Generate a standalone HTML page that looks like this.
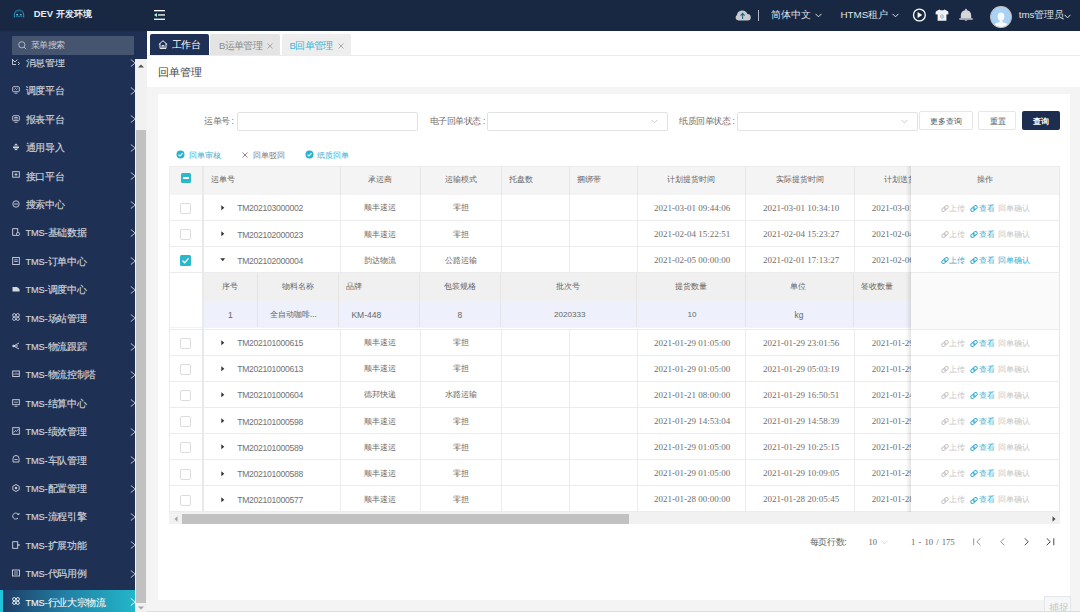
<!DOCTYPE html>
<html><head><meta charset="utf-8">
<style>
*{box-sizing:border-box;margin:0;padding:0}
html,body{width:1080px;height:612px;overflow:hidden;background:#f4f4f4;font-family:"Liberation Sans",sans-serif;color:#666}
.a{position:absolute}
.t{position:absolute;white-space:nowrap;line-height:1}
#hdr{left:0;top:0;width:1080px;height:31px;background:#182842}
#side{left:0;top:31px;width:147px;height:581px;background:#1f3055;overflow:hidden}
.mi{position:absolute;left:0;width:135px;height:28.36px;color:#d0d4db;font-size:9.5px}
.mi .ic{position:absolute;left:12px;top:7.8px;width:8px;height:8px}
.mi .tx{position:absolute;left:25.5px;top:0px;line-height:26.5px;white-space:nowrap;letter-spacing:-0.3px;-webkit-text-stroke:0.15px #d0d4db}
.mi .ar{position:absolute;left:130.3px;top:8.5px;width:7px;height:8px}
.sb{left:135px;top:59px;width:12px;height:553px;background:#f1f1f1}
.card{left:158px;top:93.6px;width:912px;height:506.4px;background:#fff}
.tbl td{position:absolute}
.bd{position:absolute;background:#e9e9e9}
.cb{position:absolute;width:11px;height:11px;border:1px solid #dcdcdc;border-radius:2px;background:#fff}
.num{font-family:"Liberation Serif",serif}
</style></head><body>
<!-- header -->
<div id="hdr" class="a">
  <svg class="a" style="left:13px;top:8.5px" width="12" height="9" viewBox="0 0 12 9"><path d="M1.4 8.4 V5.6 A4.6 4.6 0 0 1 10.6 5.6 V8.4" fill="none" stroke="#2284b0" stroke-width="1.2"/><path d="M2.8 3.3 Q6 2 9.2 3.3" fill="none" stroke="#1d5f86" stroke-width="0.7"/><ellipse cx="4.2" cy="5.8" rx="1.1" ry="0.7" fill="#8fd8ee"/><ellipse cx="7.8" cy="5.8" rx="1.1" ry="0.7" fill="#5fc0e2"/><path d="M2.6 7.6 Q4.5 6.6 6 7.8 Q7.5 6.6 9.4 7.6" fill="none" stroke="#2284b0" stroke-width="0.9"/></svg>
  <div class="t" style="left:33.7px;top:9.4px;font-size:9.4px;font-weight:bold;color:#e8ebf0">DEV 开发环境</div>
  <svg class="a" style="left:154px;top:10px" width="12" height="10" viewBox="0 0 12 10"><rect x="0" y="0" width="11" height="1.3" fill="#fff"/><rect x="4" y="4.3" width="7" height="1.3" fill="#fff"/><rect x="0" y="8.6" width="11" height="1.3" fill="#fff"/><path d="M0 5 L3 3 L3 7Z" fill="#9fd"/></svg>
  <!-- right -->
  <svg class="a" style="left:734.5px;top:9.3px" width="16" height="12" viewBox="0 0 16 12"><path d="M3.3 11.5 A3.1 3.1 0 0 1 1.9 5.9 A5.5 5.5 0 0 1 12.4 5.1 A3.1 3.1 0 0 1 12.7 11.5 Z" fill="#c9cacd"/><path d="M7.6 10 V4.6 M5.6 6.6 L7.6 4.4 L9.6 6.6" stroke="#1f6585" stroke-width="1.1" fill="none"/></svg>
  <div class="a" style="left:758px;top:10px;width:1px;height:11px;background:#b4b7bf"></div>
  <div class="t" style="left:771px;top:10px;font-size:9.8px;color:#dfe2e8">简体中文</div>
  <svg class="a" style="left:815px;top:13px" width="7" height="5" viewBox="0 0 7 5"><path d="M0.5 0.8 L3.5 3.8 L6.5 0.8" stroke="#dfe2e8" stroke-width="1" fill="none"/></svg>
  <div class="t" style="left:840.5px;top:10px;font-size:9.8px;color:#dfe2e8">HTMS租户</div>
  <svg class="a" style="left:892px;top:13px" width="7" height="5" viewBox="0 0 7 5"><path d="M0.5 0.8 L3.5 3.8 L6.5 0.8" stroke="#dfe2e8" stroke-width="1" fill="none"/></svg>
  <svg class="a" style="left:912px;top:8px" width="15" height="14" viewBox="0 0 15 14"><circle cx="7.4" cy="7" r="5.9" fill="none" stroke="#fff" stroke-width="1.3"/><path d="M5.6 3.9 L10.2 7 L5.6 10.1Z" fill="#fff"/></svg>
  <svg class="a" style="left:935px;top:9px" width="14" height="13" viewBox="0 0 14 13"><path d="M4.3 0.5 L0.8 2.4 L0.5 5.2 L2.6 5.4 L2.6 11.8 L11.4 11.8 L11.4 5.4 L13.5 5.2 L13.2 2.4 L9.7 0.5 Q7 2.2 4.3 0.5Z" fill="#f2f2f2"/><rect x="6.6" y="5" width="0.9" height="5" fill="#5ab8e0"/><rect x="5.2" y="6" width="0.7" height="3" fill="#e8a0a0"/><rect x="8.2" y="6" width="0.7" height="3" fill="#e8a0a0"/></svg>
  <svg class="a" style="left:958.5px;top:7.5px" width="14" height="14" viewBox="0 0 14 14"><path d="M1.8 10.2 L1.8 7.2 A5.2 5.2 0 0 1 12.2 7.2 L12.2 10.2Z" fill="#d4d6da"/><rect x="0.3" y="10.3" width="13.4" height="1.4" fill="#d4d6da"/><rect x="5.8" y="11.5" width="2.4" height="1.2" fill="#aeb2b8"/><circle cx="7" cy="1.7" r="0.9" fill="#d4d6da"/></svg>
  <svg class="a" style="left:989.5px;top:5.5px" width="22" height="22" viewBox="0 0 22 22"><defs><clipPath id="av"><circle cx="11" cy="11" r="10"/></clipPath></defs><circle cx="11" cy="11" r="10.4" fill="#a9d1f5" stroke="#bfc3c9" stroke-width="1.1"/><g clip-path="url(#av)"><ellipse cx="11" cy="10.6" rx="3.4" ry="4.1" fill="#f7faff"/><rect x="9.6" y="13.5" width="2.8" height="3" fill="#f7faff"/><path d="M2.5 22 Q3.5 17 9.6 16.3 L12.4 16.3 Q18.5 17 19.5 22Z" fill="#f7faff"/></g></svg>
  <div class="t" style="left:1018.7px;top:10.3px;font-size:9.8px;color:#dfe2e8">tms管理员</div>
  <svg class="a" style="left:1063.5px;top:14px" width="7" height="5" viewBox="0 0 7 5"><path d="M0.5 0.8 L3.5 3.8 L6.5 0.8" stroke="#dfe2e8" stroke-width="1" fill="none"/></svg>
</div>

<!-- sidebar -->
<div id="side" class="a">
  <div id="menu" class="a" style="left:0;top:0;width:135px;height:581px;overflow:hidden">
  <div class="mi" style="top:19.00px"><svg class="ic" viewBox="0 0 8 8"><path d="M0.5 1.5 L3 4 L5.5 1.5 M0.5 1 V6.5 H4 M6 4 L7.5 5.5 L6 7" fill="none" stroke="#d3d7de" stroke-width="0.9"/></svg><div class="tx">消息管理</div><svg class="ar" viewBox="0 0 7 8"><path d="M0.8 0.5 L5.3 4 L0.8 7.5" stroke="#c9ced7" stroke-width="0.9" fill="none"/></svg></div>
<div class="mi" style="top:47.40px"><svg class="ic" viewBox="0 0 8 8"><rect x="0.7" y="0.7" width="6.6" height="5" rx="0.8" fill="none" stroke="#d3d7de" stroke-width="0.9"/><path d="M2.5 7.3 H5.5 M2.5 3.5 L3.5 2.5 L4.5 3.5 L5.5 2.5" stroke="#d3d7de" stroke-width="0.8" fill="none"/></svg><div class="tx">调度平台</div><svg class="ar" viewBox="0 0 7 8"><path d="M0.8 0.5 L5.3 4 L0.8 7.5" stroke="#c9ced7" stroke-width="0.9" fill="none"/></svg></div>
<div class="mi" style="top:75.80px"><svg class="ic" viewBox="0 0 8 8"><rect x="0.7" y="0.7" width="6.6" height="5" rx="0.8" fill="none" stroke="#d3d7de" stroke-width="0.9"/><path d="M2.5 7.3 H5.5 M2.2 4 H5.8 M2.2 2.5 H5.8" stroke="#d3d7de" stroke-width="0.8" fill="none"/></svg><div class="tx">报表平台</div><svg class="ar" viewBox="0 0 7 8"><path d="M0.8 0.5 L5.3 4 L0.8 7.5" stroke="#c9ced7" stroke-width="0.9" fill="none"/></svg></div>
<div class="mi" style="top:104.20px"><svg class="ic" viewBox="0 0 8 8"><path d="M4 0.5 L6 2.5 H2Z M1 3.5 H7 V5 H1Z M1.5 5.5 L4 7.5 L6.5 5.5" fill="#d3d7de"/></svg><div class="tx">通用导入</div><svg class="ar" viewBox="0 0 7 8"><path d="M0.8 0.5 L5.3 4 L0.8 7.5" stroke="#c9ced7" stroke-width="0.9" fill="none"/></svg></div>
<div class="mi" style="top:132.60px"><svg class="ic" viewBox="0 0 8 8"><rect x="0.7" y="0.7" width="6.6" height="5.5" fill="none" stroke="#d3d7de" stroke-width="0.9"/><path d="M2.5 3.5 H5.5 M4 2 V5" stroke="#d3d7de" stroke-width="0.8"/></svg><div class="tx">接口平台</div><svg class="ar" viewBox="0 0 7 8"><path d="M0.8 0.5 L5.3 4 L0.8 7.5" stroke="#c9ced7" stroke-width="0.9" fill="none"/></svg></div>
<div class="mi" style="top:161.00px"><svg class="ic" viewBox="0 0 8 8"><circle cx="4" cy="4" r="3.2" fill="none" stroke="#d3d7de" stroke-width="0.9"/><path d="M2 4 H6" stroke="#d3d7de" stroke-width="0.9"/></svg><div class="tx">搜索中心</div><svg class="ar" viewBox="0 0 7 8"><path d="M0.8 0.5 L5.3 4 L0.8 7.5" stroke="#c9ced7" stroke-width="0.9" fill="none"/></svg></div>
<div class="mi" style="top:189.40px"><svg class="ic" viewBox="0 0 8 8"><rect x="0.7" y="0.7" width="5" height="6.6" fill="none" stroke="#d3d7de" stroke-width="0.9"/><circle cx="6" cy="6" r="1.6" fill="#1f3055" stroke="#d3d7de" stroke-width="0.8"/></svg><div class="tx"><span style="font-size:9.2px;letter-spacing:-0.1px">TMS-</span>基础数据</div><svg class="ar" viewBox="0 0 7 8"><path d="M0.8 0.5 L5.3 4 L0.8 7.5" stroke="#c9ced7" stroke-width="0.9" fill="none"/></svg></div>
<div class="mi" style="top:217.80px"><svg class="ic" viewBox="0 0 8 8"><rect x="0.7" y="0.5" width="6.6" height="7" fill="none" stroke="#d3d7de" stroke-width="0.9"/><path d="M2.2 2.8 H5.8 M2.2 4.5 H5.8" stroke="#d3d7de" stroke-width="0.8"/></svg><div class="tx"><span style="font-size:9.2px;letter-spacing:-0.1px">TMS-</span>订单中心</div><svg class="ar" viewBox="0 0 7 8"><path d="M0.8 0.5 L5.3 4 L0.8 7.5" stroke="#c9ced7" stroke-width="0.9" fill="none"/></svg></div>
<div class="mi" style="top:246.20px"><svg class="ic" viewBox="0 0 8 8"><path d="M0.5 2 H5 L7.5 4 V6.5 H0.5Z" fill="#d3d7de"/></svg><div class="tx"><span style="font-size:9.2px;letter-spacing:-0.1px">TMS-</span>调度中心</div><svg class="ar" viewBox="0 0 7 8"><path d="M0.8 0.5 L5.3 4 L0.8 7.5" stroke="#c9ced7" stroke-width="0.9" fill="none"/></svg></div>
<div class="mi" style="top:274.60px"><svg class="ic" viewBox="0 0 8 8"><circle cx="2.2" cy="2.2" r="1.6" fill="none" stroke="#d3d7de" stroke-width="0.9"/><circle cx="5.8" cy="2.2" r="1.6" fill="none" stroke="#d3d7de" stroke-width="0.9"/><circle cx="2.2" cy="5.8" r="1.6" fill="none" stroke="#d3d7de" stroke-width="0.9"/><circle cx="5.8" cy="5.8" r="1.6" fill="none" stroke="#d3d7de" stroke-width="0.9"/></svg><div class="tx"><span style="font-size:9.2px;letter-spacing:-0.1px">TMS-</span>场站管理</div><svg class="ar" viewBox="0 0 7 8"><path d="M0.8 0.5 L5.3 4 L0.8 7.5" stroke="#c9ced7" stroke-width="0.9" fill="none"/></svg></div>
<div class="mi" style="top:303.00px"><svg class="ic" viewBox="0 0 8 8"><circle cx="1.5" cy="4" r="1.2" fill="#d3d7de"/><path d="M1.5 4 L7 1 M1.5 4 L7 7 M1.5 4 H6" stroke="#d3d7de" stroke-width="0.9"/></svg><div class="tx"><span style="font-size:9.2px;letter-spacing:-0.1px">TMS-</span>物流跟踪</div><svg class="ar" viewBox="0 0 7 8"><path d="M0.8 0.5 L5.3 4 L0.8 7.5" stroke="#c9ced7" stroke-width="0.9" fill="none"/></svg></div>
<div class="mi" style="top:331.40px"><svg class="ic" viewBox="0 0 8 8"><rect x="0.7" y="1" width="6.6" height="5.5" fill="none" stroke="#d3d7de" stroke-width="0.9"/><path d="M2 5 V3.5 M4 5 V2.5 M6 5 V3" stroke="#d3d7de" stroke-width="0.8"/></svg><div class="tx"><span style="font-size:9.2px;letter-spacing:-0.1px">TMS-</span>物流控制塔</div><svg class="ar" viewBox="0 0 7 8"><path d="M0.8 0.5 L5.3 4 L0.8 7.5" stroke="#c9ced7" stroke-width="0.9" fill="none"/></svg></div>
<div class="mi" style="top:359.80px"><svg class="ic" viewBox="0 0 8 8"><rect x="0.7" y="0.7" width="6.6" height="5" fill="none" stroke="#d3d7de" stroke-width="0.9"/><path d="M2.5 7.3 H5.5 M2.2 3.2 H5.8" stroke="#d3d7de" stroke-width="0.8"/></svg><div class="tx"><span style="font-size:9.2px;letter-spacing:-0.1px">TMS-</span>结算中心</div><svg class="ar" viewBox="0 0 7 8"><path d="M0.8 0.5 L5.3 4 L0.8 7.5" stroke="#c9ced7" stroke-width="0.9" fill="none"/></svg></div>
<div class="mi" style="top:388.20px"><svg class="ic" viewBox="0 0 8 8"><rect x="0.7" y="0.7" width="6.6" height="6.6" fill="none" stroke="#d3d7de" stroke-width="0.9"/><path d="M1.5 5.5 L3.2 3.5 L4.5 4.5 L6.5 2" stroke="#d3d7de" stroke-width="0.8" fill="none"/></svg><div class="tx"><span style="font-size:9.2px;letter-spacing:-0.1px">TMS-</span>绩效管理</div><svg class="ar" viewBox="0 0 7 8"><path d="M0.8 0.5 L5.3 4 L0.8 7.5" stroke="#c9ced7" stroke-width="0.9" fill="none"/></svg></div>
<div class="mi" style="top:416.60px"><svg class="ic" viewBox="0 0 8 8"><path d="M1 7 V3.5 A3 3 0 0 1 7 3.5 V7Z" fill="none" stroke="#d3d7de" stroke-width="0.9"/><path d="M2.5 4.5 H5.5" stroke="#d3d7de" stroke-width="0.9"/></svg><div class="tx"><span style="font-size:9.2px;letter-spacing:-0.1px">TMS-</span>车队管理</div><svg class="ar" viewBox="0 0 7 8"><path d="M0.8 0.5 L5.3 4 L0.8 7.5" stroke="#c9ced7" stroke-width="0.9" fill="none"/></svg></div>
<div class="mi" style="top:445.00px"><svg class="ic" viewBox="0 0 8 8"><path d="M4 0.5 L7.2 2.3 V5.7 L4 7.5 L0.8 5.7 V2.3Z" fill="none" stroke="#d3d7de" stroke-width="0.9"/><circle cx="4" cy="4" r="1.2" fill="#d3d7de"/></svg><div class="tx"><span style="font-size:9.2px;letter-spacing:-0.1px">TMS-</span>配置管理</div><svg class="ar" viewBox="0 0 7 8"><path d="M0.8 0.5 L5.3 4 L0.8 7.5" stroke="#c9ced7" stroke-width="0.9" fill="none"/></svg></div>
<div class="mi" style="top:473.40px"><svg class="ic" viewBox="0 0 8 8"><path d="M6.5 3 A3 3 0 1 0 6 6" fill="none" stroke="#d3d7de" stroke-width="0.9"/><path d="M5.5 2.5 H7 V1" stroke="#d3d7de" stroke-width="0.9" fill="none"/></svg><div class="tx"><span style="font-size:9.2px;letter-spacing:-0.1px">TMS-</span>流程引擎</div><svg class="ar" viewBox="0 0 7 8"><path d="M0.8 0.5 L5.3 4 L0.8 7.5" stroke="#c9ced7" stroke-width="0.9" fill="none"/></svg></div>
<div class="mi" style="top:501.80px"><svg class="ic" viewBox="0 0 8 8"><rect x="0.7" y="0.7" width="5" height="6.6" fill="none" stroke="#d3d7de" stroke-width="0.9"/><path d="M5 4 H7.5 M6.5 3 L7.5 4 L6.5 5" stroke="#d3d7de" stroke-width="0.8" fill="none"/></svg><div class="tx"><span style="font-size:9.2px;letter-spacing:-0.1px">TMS-</span>扩展功能</div><svg class="ar" viewBox="0 0 7 8"><path d="M0.8 0.5 L5.3 4 L0.8 7.5" stroke="#c9ced7" stroke-width="0.9" fill="none"/></svg></div>
<div class="mi" style="top:530.20px"><svg class="ic" viewBox="0 0 8 8"><rect x="0.5" y="1" width="7" height="6" fill="none" stroke="#d3d7de" stroke-width="0.9"/><path d="M2 3 H6 M2 5 H6" stroke="#d3d7de" stroke-width="0.8"/></svg><div class="tx"><span style="font-size:9.2px;letter-spacing:-0.1px">TMS-</span>代码用例</div><svg class="ar" viewBox="0 0 7 8"><path d="M0.8 0.5 L5.3 4 L0.8 7.5" stroke="#c9ced7" stroke-width="0.9" fill="none"/></svg></div>
<div class="mi" style="top:558.60px;background:linear-gradient(90deg,#1e3862 0%,#2282a5 50%,#22b6ca 100%);color:#fff"><div class="a" style="left:0;top:0;width:2.5px;height:100%;background:#20c4d8"></div><svg class="ic" viewBox="0 0 8 8"><circle cx="2.2" cy="2.2" r="1.6" fill="none" stroke="#fff" stroke-width="0.9"/><circle cx="5.8" cy="2.2" r="1.6" fill="none" stroke="#fff" stroke-width="0.9"/><circle cx="2.2" cy="5.8" r="1.6" fill="none" stroke="#fff" stroke-width="0.9"/><circle cx="5.8" cy="5.8" r="1.6" fill="none" stroke="#fff" stroke-width="0.9"/></svg><div class="tx"><span style="font-size:9.2px;letter-spacing:-0.1px">TMS-</span>行业大宗物流</div><svg class="ar" viewBox="0 0 7 8"><path d="M0.8 0.5 L5.3 4 L0.8 7.5" stroke="#fff" stroke-width="0.9" fill="none"/></svg></div>
  </div>
  <div class="a" style="left:0;top:0;width:147px;height:28px;background:#1f3055"></div>
  <div class="a" style="left:12px;top:5px;width:122px;height:19px;background:#46556f;border-radius:1px"></div>
  <svg class="a" style="left:18px;top:10px" width="9" height="9" viewBox="0 0 9 9"><circle cx="3.8" cy="3.8" r="3.1" fill="none" stroke="#b8bfcb" stroke-width="0.9"/><path d="M6 6 L8.2 8.2" stroke="#b8bfcb" stroke-width="0.9"/></svg>
  <div class="t" style="left:31.3px;top:10px;font-size:8.6px;letter-spacing:-0.85px;color:#c6cbd3">菜单搜索</div>
</div>
<div class="a sb">
  <div class="a" style="left:1px;top:71px;width:10px;height:473px;background:#c1c1c1"></div>
  <svg class="a" style="left:3px;top:5px" width="6" height="4"><path d="M0 3.5 L3 0.5 L6 3.5Z" fill="#505050"/></svg>
  <svg class="a" style="left:3px;top:547px" width="6" height="4"><path d="M0 0.5 L3 3.5 L6 0.5Z" fill="#a3a3a3"/></svg>
</div>

<!-- tabs bar -->
<div class="a" style="left:147px;top:31px;width:933px;height:56px;background:#fff"></div>
<div class="a" style="left:147px;top:55px;width:933px;height:1px;background:#ececec"></div>
<div class="a" style="left:150px;top:34px;width:59px;height:21px;background:#1f3055;border-radius:2px 2px 0 0"></div>
<svg class="a" style="left:157.5px;top:40.3px" width="10" height="9" viewBox="0 0 10 9"><path d="M0.8 4.6 L5 0.7 L9.2 4.6 M2 3.6 V8.4 H8 V3.6 M4 8.4 V5.6 H6 V8.4" fill="none" stroke="#fff" stroke-width="0.95"/></svg>
<div class="t" style="left:171.7px;top:40px;font-size:9.6px;letter-spacing:-0.3px;color:#fff">工作台</div>
<div class="a" style="left:210px;top:34px;width:70px;height:21px;background:#e4e4e4;border-radius:2px 2px 0 0"></div>
<div class="t" style="left:219px;top:40.5px;font-size:9.5px;letter-spacing:-0.65px;color:#8a8a8a">B运单管理</div>
<svg class="a" style="left:267px;top:42.5px" width="6" height="6"><path d="M0.5 0.5 L5.5 5.5 M5.5 0.5 L0.5 5.5" stroke="#999" stroke-width="0.8"/></svg>
<div class="a" style="left:281.5px;top:34px;width:69px;height:21px;background:#eeeeee;border-radius:2px 2px 0 0"></div>
<div class="t" style="left:289.5px;top:40.5px;font-size:9.5px;letter-spacing:-0.65px;color:#3db6d8">B回单管理</div>
<svg class="a" style="left:338px;top:42.5px" width="6" height="6"><path d="M0.5 0.5 L5.5 5.5 M5.5 0.5 L0.5 5.5" stroke="#999" stroke-width="0.8"/></svg>
<div class="t" style="left:157.7px;top:66.5px;font-size:11px;color:#444">回单管理</div>
<div class="a" style="left:147px;top:87px;width:933px;height:525px;background:#f4f4f4"></div>

<!-- card -->
<div class="a card">
</div>
<div class="t" style="left:204px;top:116.5px;font-size:8.6px;color:#707070;letter-spacing:-0.45px">运单号 :</div>
<div class="a" style="left:237px;top:111.6px;width:181px;height:19px;background:#fff;border:1px solid #e2e2e2;border-radius:2px"></div>
<div class="t" style="left:429.7px;top:116.5px;font-size:8.6px;color:#707070;letter-spacing:-0.45px">电子回单状态 :</div>
<div class="a" style="left:487px;top:111.6px;width:181.3px;height:19px;background:#fff;border:1px solid #e2e2e2;border-radius:2px"></div>
<svg class="a" style="left:651px;top:119px" width="7" height="5"><path d="M0.5 0.8 L3.5 3.8 L6.5 0.8" stroke="#bbb" stroke-width="0.8" fill="none"/></svg>
<div class="t" style="left:679.3px;top:116.5px;font-size:8.6px;color:#707070;letter-spacing:-0.45px">纸质回单状态 :</div>
<div class="a" style="left:737.4px;top:111.6px;width:180.6px;height:19px;background:#fff;border:1px solid #e2e2e2;border-radius:2px"></div>
<svg class="a" style="left:901px;top:119px" width="7" height="5"><path d="M0.5 0.8 L3.5 3.8 L6.5 0.8" stroke="#bbb" stroke-width="0.8" fill="none"/></svg>
<div class="a" style="left:919.3px;top:111.3px;width:53.7px;height:19px;background:#fff;border:1px solid #e6e6e6;border-radius:2px"></div>
<div class="t" style="left:930px;top:117.6px;font-size:8.1px;color:#555;">更多查询</div>
<div class="a" style="left:978.3px;top:111.3px;width:38px;height:19px;background:#fff;border:1px solid #e6e6e6;border-radius:2px"></div>
<div class="t" style="left:989.7px;top:117.6px;font-size:8.1px;color:#555;">重置</div>
<div class="a" style="left:1022px;top:111.3px;width:38px;height:18.8px;background:#1d2d50;border-radius:2px"></div>
<div class="t" style="left:1032.5px;top:117.4px;font-size:8.3px;color:#fff;font-weight:bold">查询</div>
<svg class="a" style="left:176.3px;top:150.3px" width="9" height="9" viewBox="0 0 9 9"><circle cx="4.5" cy="4.5" r="4" fill="#2ab1cf"/><path d="M2.5 4.6 L4 6 L6.6 3.2" stroke="#fff" stroke-width="1.1" fill="none"/></svg>
<div class="t" style="left:188.7px;top:151.8px;font-size:8.2px;color:#3bb0d3;">回单审核</div>
<svg class="a" style="left:242px;top:152.3px" width="6" height="6"><path d="M0.5 0.5 L5.5 5.5 M5.5 0.5 L0.5 5.5" stroke="#8a7a72" stroke-width="0.9"/></svg>
<div class="t" style="left:253px;top:151.8px;font-size:8.2px;color:#8a7a72;">回单驳回</div>
<svg class="a" style="left:304.6px;top:150.3px" width="9" height="9" viewBox="0 0 9 9"><circle cx="4.5" cy="4.5" r="4" fill="#2ab1cf"/><path d="M2.5 4.6 L4 6 L6.6 3.2" stroke="#fff" stroke-width="1.1" fill="none"/></svg>
<div class="t" style="left:316.9px;top:151.8px;font-size:8.2px;color:#3bb0d3;">纸质回单</div>
<div class="a" style="left:169.4px;top:166px;width:890.6px;height:28.69999999999999px;background:#f4f4f4;border-top:1px solid #ececec"></div>
<div class="t" style="left:211px;top:175.5px;font-size:8.2px;color:#666;">运单号</div>
<div class="t" style="left:368px;top:175.5px;font-size:8.2px;color:#666;">承运商</div>
<div class="t" style="left:444.5px;top:175.5px;font-size:8.2px;color:#666;">运输模式</div>
<div class="t" style="left:509px;top:175.5px;font-size:8.2px;color:#666;">托盘数</div>
<div class="t" style="left:577.2px;top:175.5px;font-size:8.2px;color:#666;">捆绑带</div>
<div class="t" style="left:667px;top:175.5px;font-size:8.2px;color:#666;">计划提货时间</div>
<div class="t" style="left:775.5px;top:175.5px;font-size:8.2px;color:#666;">实际提货时间</div>
<div class="t" style="left:884px;top:175.5px;font-size:8.2px;color:#666;">计划送货时间</div>
<div class="a" style="left:180.7px;top:172.7px;width:10.6px;height:10.6px;background:#2bb8cb;border-radius:1.5px"></div><div class="a" style="left:182.7px;top:177.3px;width:6.6px;height:1.4px;background:#fff"></div>
<div class="a" style="left:203px;top:166px;width:1px;height:28.69999999999999px;background:#e6e6e6;"></div>
<div class="a" style="left:339.6px;top:166px;width:1px;height:28.69999999999999px;background:#e6e6e6;"></div>
<div class="a" style="left:420.2px;top:166px;width:1px;height:28.69999999999999px;background:#e6e6e6;"></div>
<div class="a" style="left:501.2px;top:166px;width:1px;height:28.69999999999999px;background:#e6e6e6;"></div>
<div class="a" style="left:569.2px;top:166px;width:1px;height:28.69999999999999px;background:#e6e6e6;"></div>
<div class="a" style="left:636.8px;top:166px;width:1px;height:28.69999999999999px;background:#e6e6e6;"></div>
<div class="a" style="left:745.2px;top:166px;width:1px;height:28.69999999999999px;background:#e6e6e6;"></div>
<div class="a" style="left:854.2px;top:166px;width:1px;height:28.69999999999999px;background:#e6e6e6;"></div>
<div class="a" style="left:169.4px;top:219.79999999999998px;width:890.6px;height:1px;background:#ececec;"></div>
<div class="a" style="left:203px;top:194.7px;width:1px;height:26.1px;background:#ececec;"></div>
<div class="a" style="left:339.6px;top:194.7px;width:1px;height:26.1px;background:#ececec;"></div>
<div class="a" style="left:420.2px;top:194.7px;width:1px;height:26.1px;background:#ececec;"></div>
<div class="a" style="left:501.2px;top:194.7px;width:1px;height:26.1px;background:#ececec;"></div>
<div class="a" style="left:569.2px;top:194.7px;width:1px;height:26.1px;background:#ececec;"></div>
<div class="a" style="left:636.8px;top:194.7px;width:1px;height:26.1px;background:#ececec;"></div>
<div class="a" style="left:745.2px;top:194.7px;width:1px;height:26.1px;background:#ececec;"></div>
<div class="a" style="left:854.2px;top:194.7px;width:1px;height:26.1px;background:#ececec;"></div>
<div class="cb" style="left:180.3px;top:203.2px"></div>
<svg class="a" style="left:221px;top:205.2px" width="4" height="6"><path d="M0.3 0.3 L3.3 2.8 L0.3 5.3Z" fill="#333"/></svg>
<div class="t" style="left:237.2px;top:204.39999999999998px;font-size:8.6px;color:#727272;letter-spacing:-0.28px">TM202103000002</div>
<div class="t" style="left:364px;top:204.39999999999998px;font-size:8.2px;color:#666;">顺丰速运</div>
<div class="t" style="left:453.3px;top:204.39999999999998px;font-size:8.2px;color:#666;">零担</div>
<div class="t" style="left:654px;top:203.89999999999998px;font-size:9px;color:#6e6e6e;font-family:'Liberation Serif',serif">2021-03-01 09:44:06</div>
<div class="t" style="left:763px;top:203.89999999999998px;font-size:9px;color:#6e6e6e;font-family:'Liberation Serif',serif">2021-03-01 10:34:10</div>
<div class="t" style="left:871.8px;top:203.89999999999998px;font-size:9px;color:#6e6e6e;font-family:'Liberation Serif',serif">2021-03-01</div>
<div class="a" style="left:169.4px;top:245.89999999999998px;width:890.6px;height:1px;background:#ececec;"></div>
<div class="a" style="left:203px;top:220.79999999999998px;width:1px;height:26.1px;background:#ececec;"></div>
<div class="a" style="left:339.6px;top:220.79999999999998px;width:1px;height:26.1px;background:#ececec;"></div>
<div class="a" style="left:420.2px;top:220.79999999999998px;width:1px;height:26.1px;background:#ececec;"></div>
<div class="a" style="left:501.2px;top:220.79999999999998px;width:1px;height:26.1px;background:#ececec;"></div>
<div class="a" style="left:569.2px;top:220.79999999999998px;width:1px;height:26.1px;background:#ececec;"></div>
<div class="a" style="left:636.8px;top:220.79999999999998px;width:1px;height:26.1px;background:#ececec;"></div>
<div class="a" style="left:745.2px;top:220.79999999999998px;width:1px;height:26.1px;background:#ececec;"></div>
<div class="a" style="left:854.2px;top:220.79999999999998px;width:1px;height:26.1px;background:#ececec;"></div>
<div class="cb" style="left:180.3px;top:229.3px"></div>
<svg class="a" style="left:221px;top:231.3px" width="4" height="6"><path d="M0.3 0.3 L3.3 2.8 L0.3 5.3Z" fill="#333"/></svg>
<div class="t" style="left:237.2px;top:230.49999999999997px;font-size:8.6px;color:#727272;letter-spacing:-0.28px">TM202102000023</div>
<div class="t" style="left:364px;top:230.49999999999997px;font-size:8.2px;color:#666;">顺丰速运</div>
<div class="t" style="left:453.3px;top:230.49999999999997px;font-size:8.2px;color:#666;">零担</div>
<div class="t" style="left:654px;top:229.99999999999997px;font-size:9px;color:#6e6e6e;font-family:'Liberation Serif',serif">2021-02-04 15:22:51</div>
<div class="t" style="left:763px;top:229.99999999999997px;font-size:9px;color:#6e6e6e;font-family:'Liberation Serif',serif">2021-02-04 15:23:27</div>
<div class="t" style="left:871.8px;top:229.99999999999997px;font-size:9px;color:#6e6e6e;font-family:'Liberation Serif',serif">2021-02-04</div>
<div class="a" style="left:169.4px;top:272.0px;width:890.6px;height:1px;background:#ececec;"></div>
<div class="a" style="left:203px;top:246.89999999999998px;width:1px;height:26.1px;background:#ececec;"></div>
<div class="a" style="left:339.6px;top:246.89999999999998px;width:1px;height:26.1px;background:#ececec;"></div>
<div class="a" style="left:420.2px;top:246.89999999999998px;width:1px;height:26.1px;background:#ececec;"></div>
<div class="a" style="left:501.2px;top:246.89999999999998px;width:1px;height:26.1px;background:#ececec;"></div>
<div class="a" style="left:569.2px;top:246.89999999999998px;width:1px;height:26.1px;background:#ececec;"></div>
<div class="a" style="left:636.8px;top:246.89999999999998px;width:1px;height:26.1px;background:#ececec;"></div>
<div class="a" style="left:745.2px;top:246.89999999999998px;width:1px;height:26.1px;background:#ececec;"></div>
<div class="a" style="left:854.2px;top:246.89999999999998px;width:1px;height:26.1px;background:#ececec;"></div>
<div class="a" style="left:180.3px;top:255.4px;width:11px;height:11px;background:#2bb8cb;border-radius:1.5px"></div><svg class="a" style="left:180.3px;top:255.4px" width="11" height="11"><path d="M2.5 5.6 L4.6 7.7 L8.6 3.4" stroke="#fff" stroke-width="1.3" fill="none"/></svg>
<svg class="a" style="left:220px;top:258.4px" width="6" height="4"><path d="M0.3 0.3 H5.2 L2.75 3.2Z" fill="#333"/></svg>
<div class="t" style="left:237.2px;top:256.59999999999997px;font-size:8.6px;color:#727272;letter-spacing:-0.28px">TM202102000004</div>
<div class="t" style="left:364px;top:256.59999999999997px;font-size:8.2px;color:#666;">韵达物流</div>
<div class="t" style="left:445.1px;top:256.59999999999997px;font-size:8.2px;color:#666;">公路运输</div>
<div class="t" style="left:654px;top:256.09999999999997px;font-size:9px;color:#6e6e6e;font-family:'Liberation Serif',serif">2021-02-05 00:00:00</div>
<div class="t" style="left:763px;top:256.09999999999997px;font-size:9px;color:#6e6e6e;font-family:'Liberation Serif',serif">2021-02-01 17:13:27</div>
<div class="t" style="left:871.8px;top:256.09999999999997px;font-size:9px;color:#6e6e6e;font-family:'Liberation Serif',serif">2021-02-06</div>
<div class="a" style="left:203px;top:273.0px;width:857px;height:28.4px;background:#f0f0f0;"></div>
<div class="a" style="left:203px;top:301.4px;width:857px;height:25.5px;background:#eef1fb;"></div>
<div class="a" style="left:257px;top:273.0px;width:1px;height:53.9px;background:#e5e5e5;"></div>
<div class="a" style="left:338.3px;top:273.0px;width:1px;height:53.9px;background:#e5e5e5;"></div>
<div class="a" style="left:419.4px;top:273.0px;width:1px;height:53.9px;background:#e5e5e5;"></div>
<div class="a" style="left:500.4px;top:273.0px;width:1px;height:53.9px;background:#e5e5e5;"></div>
<div class="a" style="left:636px;top:273.0px;width:1px;height:53.9px;background:#e5e5e5;"></div>
<div class="a" style="left:744.8px;top:273.0px;width:1px;height:53.9px;background:#e5e5e5;"></div>
<div class="a" style="left:852.8px;top:273.0px;width:1px;height:53.9px;background:#e5e5e5;"></div>
<div class="t" style="left:222px;top:283.3px;font-size:8.2px;color:#666;">序号</div>
<div class="t" style="left:281.5px;top:283.3px;font-size:8.2px;color:#666;">物料名称</div>
<div class="t" style="left:345.8px;top:283.3px;font-size:8.2px;color:#666;">品牌</div>
<div class="t" style="left:444px;top:283.3px;font-size:8.2px;color:#666;">包装规格</div>
<div class="t" style="left:556px;top:283.3px;font-size:8.2px;color:#666;">批次号</div>
<div class="t" style="left:675px;top:283.3px;font-size:8.2px;color:#666;">提货数量</div>
<div class="t" style="left:790px;top:283.3px;font-size:8.2px;color:#666;">单位</div>
<div class="t" style="left:861px;top:283.3px;font-size:8.2px;color:#666;">签收数量</div>
<div class="t" style="left:228px;top:310.9px;font-size:8.5px;color:#666;">1</div>
<div class="t" style="left:270px;top:310.9px;font-size:8.2px;color:#666;">全自动咖啡...</div>
<div class="t" style="left:351.4px;top:310.9px;font-size:8.5px;color:#666;">KM-448</div>
<div class="t" style="left:457.5px;top:310.9px;font-size:8.5px;color:#666;">8</div>
<div class="t" style="left:554px;top:310.9px;font-size:8.1px;color:#666;">2020333</div>
<div class="t" style="left:687.5px;top:310.9px;font-size:8.1px;color:#666;">10</div>
<div class="t" style="left:794.5px;top:310.9px;font-size:8.3px;color:#666;">kg</div>
<div class="a" style="left:169.4px;top:326.9px;width:890.6px;height:1.5px;background:#f3f3f3;"></div>
<div class="a" style="left:169.4px;top:328.5px;width:890.6px;height:1px;background:#ececec;"></div>
<div class="a" style="left:202.5px;top:273.0px;width:1px;height:53.9px;background:#ececec;"></div>
<div class="a" style="left:169.4px;top:354.6px;width:890.6px;height:1px;background:#ececec;"></div>
<div class="a" style="left:203px;top:329.5px;width:1px;height:26.1px;background:#ececec;"></div>
<div class="a" style="left:339.6px;top:329.5px;width:1px;height:26.1px;background:#ececec;"></div>
<div class="a" style="left:420.2px;top:329.5px;width:1px;height:26.1px;background:#ececec;"></div>
<div class="a" style="left:501.2px;top:329.5px;width:1px;height:26.1px;background:#ececec;"></div>
<div class="a" style="left:569.2px;top:329.5px;width:1px;height:26.1px;background:#ececec;"></div>
<div class="a" style="left:636.8px;top:329.5px;width:1px;height:26.1px;background:#ececec;"></div>
<div class="a" style="left:745.2px;top:329.5px;width:1px;height:26.1px;background:#ececec;"></div>
<div class="a" style="left:854.2px;top:329.5px;width:1px;height:26.1px;background:#ececec;"></div>
<div class="cb" style="left:180.3px;top:338.0px"></div>
<svg class="a" style="left:221px;top:340.0px" width="4" height="6"><path d="M0.3 0.3 L3.3 2.8 L0.3 5.3Z" fill="#333"/></svg>
<div class="t" style="left:237.2px;top:339.2px;font-size:8.6px;color:#727272;letter-spacing:-0.28px">TM202101000615</div>
<div class="t" style="left:364px;top:339.2px;font-size:8.2px;color:#666;">顺丰速运</div>
<div class="t" style="left:453.3px;top:339.2px;font-size:8.2px;color:#666;">零担</div>
<div class="t" style="left:654px;top:338.7px;font-size:9px;color:#6e6e6e;font-family:'Liberation Serif',serif">2021-01-29 01:05:00</div>
<div class="t" style="left:763px;top:338.7px;font-size:9px;color:#6e6e6e;font-family:'Liberation Serif',serif">2021-01-29 23:01:56</div>
<div class="t" style="left:871.8px;top:338.7px;font-size:9px;color:#6e6e6e;font-family:'Liberation Serif',serif">2021-01-29</div>
<div class="a" style="left:169.4px;top:380.70000000000005px;width:890.6px;height:1px;background:#ececec;"></div>
<div class="a" style="left:203px;top:355.6px;width:1px;height:26.1px;background:#ececec;"></div>
<div class="a" style="left:339.6px;top:355.6px;width:1px;height:26.1px;background:#ececec;"></div>
<div class="a" style="left:420.2px;top:355.6px;width:1px;height:26.1px;background:#ececec;"></div>
<div class="a" style="left:501.2px;top:355.6px;width:1px;height:26.1px;background:#ececec;"></div>
<div class="a" style="left:569.2px;top:355.6px;width:1px;height:26.1px;background:#ececec;"></div>
<div class="a" style="left:636.8px;top:355.6px;width:1px;height:26.1px;background:#ececec;"></div>
<div class="a" style="left:745.2px;top:355.6px;width:1px;height:26.1px;background:#ececec;"></div>
<div class="a" style="left:854.2px;top:355.6px;width:1px;height:26.1px;background:#ececec;"></div>
<div class="cb" style="left:180.3px;top:364.1px"></div>
<svg class="a" style="left:221px;top:366.1px" width="4" height="6"><path d="M0.3 0.3 L3.3 2.8 L0.3 5.3Z" fill="#333"/></svg>
<div class="t" style="left:237.2px;top:365.3px;font-size:8.6px;color:#727272;letter-spacing:-0.28px">TM202101000613</div>
<div class="t" style="left:364px;top:365.3px;font-size:8.2px;color:#666;">顺丰速运</div>
<div class="t" style="left:453.3px;top:365.3px;font-size:8.2px;color:#666;">零担</div>
<div class="t" style="left:654px;top:364.8px;font-size:9px;color:#6e6e6e;font-family:'Liberation Serif',serif">2021-01-29 01:05:00</div>
<div class="t" style="left:763px;top:364.8px;font-size:9px;color:#6e6e6e;font-family:'Liberation Serif',serif">2021-01-29 05:03:19</div>
<div class="t" style="left:871.8px;top:364.8px;font-size:9px;color:#6e6e6e;font-family:'Liberation Serif',serif">2021-01-29</div>
<div class="a" style="left:169.4px;top:406.80000000000007px;width:890.6px;height:1px;background:#ececec;"></div>
<div class="a" style="left:203px;top:381.70000000000005px;width:1px;height:26.1px;background:#ececec;"></div>
<div class="a" style="left:339.6px;top:381.70000000000005px;width:1px;height:26.1px;background:#ececec;"></div>
<div class="a" style="left:420.2px;top:381.70000000000005px;width:1px;height:26.1px;background:#ececec;"></div>
<div class="a" style="left:501.2px;top:381.70000000000005px;width:1px;height:26.1px;background:#ececec;"></div>
<div class="a" style="left:569.2px;top:381.70000000000005px;width:1px;height:26.1px;background:#ececec;"></div>
<div class="a" style="left:636.8px;top:381.70000000000005px;width:1px;height:26.1px;background:#ececec;"></div>
<div class="a" style="left:745.2px;top:381.70000000000005px;width:1px;height:26.1px;background:#ececec;"></div>
<div class="a" style="left:854.2px;top:381.70000000000005px;width:1px;height:26.1px;background:#ececec;"></div>
<div class="cb" style="left:180.3px;top:390.2px"></div>
<svg class="a" style="left:221px;top:392.2px" width="4" height="6"><path d="M0.3 0.3 L3.3 2.8 L0.3 5.3Z" fill="#333"/></svg>
<div class="t" style="left:237.2px;top:391.40000000000003px;font-size:8.6px;color:#727272;letter-spacing:-0.28px">TM202101000604</div>
<div class="t" style="left:364px;top:391.40000000000003px;font-size:8.2px;color:#666;">德邦快递</div>
<div class="t" style="left:445.1px;top:391.40000000000003px;font-size:8.2px;color:#666;">水路运输</div>
<div class="t" style="left:654px;top:390.90000000000003px;font-size:9px;color:#6e6e6e;font-family:'Liberation Serif',serif">2021-01-21 08:00:00</div>
<div class="t" style="left:763px;top:390.90000000000003px;font-size:9px;color:#6e6e6e;font-family:'Liberation Serif',serif">2021-01-29 16:50:51</div>
<div class="t" style="left:871.8px;top:390.90000000000003px;font-size:9px;color:#6e6e6e;font-family:'Liberation Serif',serif">2021-01-24</div>
<div class="a" style="left:169.4px;top:432.9000000000001px;width:890.6px;height:1px;background:#ececec;"></div>
<div class="a" style="left:203px;top:407.80000000000007px;width:1px;height:26.1px;background:#ececec;"></div>
<div class="a" style="left:339.6px;top:407.80000000000007px;width:1px;height:26.1px;background:#ececec;"></div>
<div class="a" style="left:420.2px;top:407.80000000000007px;width:1px;height:26.1px;background:#ececec;"></div>
<div class="a" style="left:501.2px;top:407.80000000000007px;width:1px;height:26.1px;background:#ececec;"></div>
<div class="a" style="left:569.2px;top:407.80000000000007px;width:1px;height:26.1px;background:#ececec;"></div>
<div class="a" style="left:636.8px;top:407.80000000000007px;width:1px;height:26.1px;background:#ececec;"></div>
<div class="a" style="left:745.2px;top:407.80000000000007px;width:1px;height:26.1px;background:#ececec;"></div>
<div class="a" style="left:854.2px;top:407.80000000000007px;width:1px;height:26.1px;background:#ececec;"></div>
<div class="cb" style="left:180.3px;top:416.3px"></div>
<svg class="a" style="left:221px;top:418.3px" width="4" height="6"><path d="M0.3 0.3 L3.3 2.8 L0.3 5.3Z" fill="#333"/></svg>
<div class="t" style="left:237.2px;top:417.50000000000006px;font-size:8.6px;color:#727272;letter-spacing:-0.28px">TM202101000598</div>
<div class="t" style="left:364px;top:417.50000000000006px;font-size:8.2px;color:#666;">顺丰速运</div>
<div class="t" style="left:453.3px;top:417.50000000000006px;font-size:8.2px;color:#666;">零担</div>
<div class="t" style="left:654px;top:417.00000000000006px;font-size:9px;color:#6e6e6e;font-family:'Liberation Serif',serif">2021-01-29 14:53:04</div>
<div class="t" style="left:763px;top:417.00000000000006px;font-size:9px;color:#6e6e6e;font-family:'Liberation Serif',serif">2021-01-29 14:58:39</div>
<div class="t" style="left:871.8px;top:417.00000000000006px;font-size:9px;color:#6e6e6e;font-family:'Liberation Serif',serif">2021-01-29</div>
<div class="a" style="left:169.4px;top:459.0000000000001px;width:890.6px;height:1px;background:#ececec;"></div>
<div class="a" style="left:203px;top:433.9000000000001px;width:1px;height:26.1px;background:#ececec;"></div>
<div class="a" style="left:339.6px;top:433.9000000000001px;width:1px;height:26.1px;background:#ececec;"></div>
<div class="a" style="left:420.2px;top:433.9000000000001px;width:1px;height:26.1px;background:#ececec;"></div>
<div class="a" style="left:501.2px;top:433.9000000000001px;width:1px;height:26.1px;background:#ececec;"></div>
<div class="a" style="left:569.2px;top:433.9000000000001px;width:1px;height:26.1px;background:#ececec;"></div>
<div class="a" style="left:636.8px;top:433.9000000000001px;width:1px;height:26.1px;background:#ececec;"></div>
<div class="a" style="left:745.2px;top:433.9000000000001px;width:1px;height:26.1px;background:#ececec;"></div>
<div class="a" style="left:854.2px;top:433.9000000000001px;width:1px;height:26.1px;background:#ececec;"></div>
<div class="cb" style="left:180.3px;top:442.4px"></div>
<svg class="a" style="left:221px;top:444.4px" width="4" height="6"><path d="M0.3 0.3 L3.3 2.8 L0.3 5.3Z" fill="#333"/></svg>
<div class="t" style="left:237.2px;top:443.6000000000001px;font-size:8.6px;color:#727272;letter-spacing:-0.28px">TM202101000589</div>
<div class="t" style="left:364px;top:443.6000000000001px;font-size:8.2px;color:#666;">顺丰速运</div>
<div class="t" style="left:453.3px;top:443.6000000000001px;font-size:8.2px;color:#666;">零担</div>
<div class="t" style="left:654px;top:443.1000000000001px;font-size:9px;color:#6e6e6e;font-family:'Liberation Serif',serif">2021-01-29 01:05:00</div>
<div class="t" style="left:763px;top:443.1000000000001px;font-size:9px;color:#6e6e6e;font-family:'Liberation Serif',serif">2021-01-29 10:25:15</div>
<div class="t" style="left:871.8px;top:443.1000000000001px;font-size:9px;color:#6e6e6e;font-family:'Liberation Serif',serif">2021-01-29</div>
<div class="a" style="left:169.4px;top:485.10000000000014px;width:890.6px;height:1px;background:#ececec;"></div>
<div class="a" style="left:203px;top:460.0000000000001px;width:1px;height:26.1px;background:#ececec;"></div>
<div class="a" style="left:339.6px;top:460.0000000000001px;width:1px;height:26.1px;background:#ececec;"></div>
<div class="a" style="left:420.2px;top:460.0000000000001px;width:1px;height:26.1px;background:#ececec;"></div>
<div class="a" style="left:501.2px;top:460.0000000000001px;width:1px;height:26.1px;background:#ececec;"></div>
<div class="a" style="left:569.2px;top:460.0000000000001px;width:1px;height:26.1px;background:#ececec;"></div>
<div class="a" style="left:636.8px;top:460.0000000000001px;width:1px;height:26.1px;background:#ececec;"></div>
<div class="a" style="left:745.2px;top:460.0000000000001px;width:1px;height:26.1px;background:#ececec;"></div>
<div class="a" style="left:854.2px;top:460.0000000000001px;width:1px;height:26.1px;background:#ececec;"></div>
<div class="cb" style="left:180.3px;top:468.5px"></div>
<svg class="a" style="left:221px;top:470.5px" width="4" height="6"><path d="M0.3 0.3 L3.3 2.8 L0.3 5.3Z" fill="#333"/></svg>
<div class="t" style="left:237.2px;top:469.7000000000001px;font-size:8.6px;color:#727272;letter-spacing:-0.28px">TM202101000588</div>
<div class="t" style="left:364px;top:469.7000000000001px;font-size:8.2px;color:#666;">顺丰速运</div>
<div class="t" style="left:453.3px;top:469.7000000000001px;font-size:8.2px;color:#666;">零担</div>
<div class="t" style="left:654px;top:469.2000000000001px;font-size:9px;color:#6e6e6e;font-family:'Liberation Serif',serif">2021-01-29 01:05:00</div>
<div class="t" style="left:763px;top:469.2000000000001px;font-size:9px;color:#6e6e6e;font-family:'Liberation Serif',serif">2021-01-29 10:09:05</div>
<div class="t" style="left:871.8px;top:469.2000000000001px;font-size:9px;color:#6e6e6e;font-family:'Liberation Serif',serif">2021-01-29</div>
<div class="a" style="left:169.4px;top:511.20000000000016px;width:890.6px;height:1px;background:#ececec;"></div>
<div class="a" style="left:203px;top:486.10000000000014px;width:1px;height:26.1px;background:#ececec;"></div>
<div class="a" style="left:339.6px;top:486.10000000000014px;width:1px;height:26.1px;background:#ececec;"></div>
<div class="a" style="left:420.2px;top:486.10000000000014px;width:1px;height:26.1px;background:#ececec;"></div>
<div class="a" style="left:501.2px;top:486.10000000000014px;width:1px;height:26.1px;background:#ececec;"></div>
<div class="a" style="left:569.2px;top:486.10000000000014px;width:1px;height:26.1px;background:#ececec;"></div>
<div class="a" style="left:636.8px;top:486.10000000000014px;width:1px;height:26.1px;background:#ececec;"></div>
<div class="a" style="left:745.2px;top:486.10000000000014px;width:1px;height:26.1px;background:#ececec;"></div>
<div class="a" style="left:854.2px;top:486.10000000000014px;width:1px;height:26.1px;background:#ececec;"></div>
<div class="cb" style="left:180.3px;top:494.6px"></div>
<svg class="a" style="left:221px;top:496.6px" width="4" height="6"><path d="M0.3 0.3 L3.3 2.8 L0.3 5.3Z" fill="#333"/></svg>
<div class="t" style="left:237.2px;top:495.8000000000001px;font-size:8.6px;color:#727272;letter-spacing:-0.28px">TM202101000577</div>
<div class="t" style="left:364px;top:495.8000000000001px;font-size:8.2px;color:#666;">顺丰速运</div>
<div class="t" style="left:453.3px;top:495.8000000000001px;font-size:8.2px;color:#666;">零担</div>
<div class="t" style="left:654px;top:495.3000000000001px;font-size:9px;color:#6e6e6e;font-family:'Liberation Serif',serif">2021-01-28 00:00:00</div>
<div class="t" style="left:763px;top:495.3000000000001px;font-size:9px;color:#6e6e6e;font-family:'Liberation Serif',serif">2021-01-28 20:05:45</div>
<div class="t" style="left:871.8px;top:495.3000000000001px;font-size:9px;color:#6e6e6e;font-family:'Liberation Serif',serif">2021-01-28</div>
<div class="a" style="left:202.3px;top:166px;width:1.8px;height:346.20000000000016px;background:#e9e9e9;"></div>
<div class="a" style="left:169.4px;top:166px;width:1px;height:346.20000000000016px;background:#ececec;"></div>
<div class="a" style="left:905.8px;top:166px;width:5px;height:346.20000000000016px;background:linear-gradient(90deg,rgba(0,0,0,0),rgba(0,0,0,0.11))"></div>
<div class="a" style="left:910.8px;top:166px;width:149.20000000000005px;height:28.69999999999999px;background:#f4f4f4;border-top:1px solid #ececec;border-right:1px solid #e6e6e6"></div>
<div class="t" style="left:976.5px;top:175.5px;font-size:8.2px;color:#666;">操作</div>
<div class="a" style="left:910.8px;top:194.7px;width:149.20000000000005px;height:26.1px;background:#fff;border-bottom:1px solid #ececec;border-right:1px solid #e6e6e6"></div>
<svg class="a" style="left:940.5px;top:205.1px" width="8" height="7" viewBox="0 0 8 7"><g transform="rotate(-40 4 3.5)"><rect x="0.3" y="1.9" width="4.4" height="3.2" rx="1.6" fill="none" stroke="#c6c6c6" stroke-width="0.95"/><rect x="3.3" y="1.9" width="4.4" height="3.2" rx="1.6" fill="none" stroke="#c6c6c6" stroke-width="0.95"/></g></svg>
<div class="t" style="left:948.6px;top:204.7px;font-size:8.2px;color:#c6c6c6;">上传</div>
<svg class="a" style="left:970px;top:205.1px" width="8" height="7" viewBox="0 0 8 7"><g transform="rotate(-40 4 3.5)"><rect x="0.3" y="1.9" width="4.4" height="3.2" rx="1.6" fill="none" stroke="#3bb0d3" stroke-width="0.95"/><rect x="3.3" y="1.9" width="4.4" height="3.2" rx="1.6" fill="none" stroke="#3bb0d3" stroke-width="0.95"/></g></svg>
<div class="t" style="left:978.6px;top:204.7px;font-size:8.2px;color:#3bb0d3;">查看</div>
<div class="t" style="left:998px;top:204.7px;font-size:8.2px;color:#c6c6c6;">回单确认</div>
<div class="a" style="left:910.8px;top:220.79999999999998px;width:149.20000000000005px;height:26.1px;background:#fff;border-bottom:1px solid #ececec;border-right:1px solid #e6e6e6"></div>
<svg class="a" style="left:940.5px;top:231.2px" width="8" height="7" viewBox="0 0 8 7"><g transform="rotate(-40 4 3.5)"><rect x="0.3" y="1.9" width="4.4" height="3.2" rx="1.6" fill="none" stroke="#c6c6c6" stroke-width="0.95"/><rect x="3.3" y="1.9" width="4.4" height="3.2" rx="1.6" fill="none" stroke="#c6c6c6" stroke-width="0.95"/></g></svg>
<div class="t" style="left:948.6px;top:230.79999999999998px;font-size:8.2px;color:#c6c6c6;">上传</div>
<svg class="a" style="left:970px;top:231.2px" width="8" height="7" viewBox="0 0 8 7"><g transform="rotate(-40 4 3.5)"><rect x="0.3" y="1.9" width="4.4" height="3.2" rx="1.6" fill="none" stroke="#3bb0d3" stroke-width="0.95"/><rect x="3.3" y="1.9" width="4.4" height="3.2" rx="1.6" fill="none" stroke="#3bb0d3" stroke-width="0.95"/></g></svg>
<div class="t" style="left:978.6px;top:230.79999999999998px;font-size:8.2px;color:#3bb0d3;">查看</div>
<div class="t" style="left:998px;top:230.79999999999998px;font-size:8.2px;color:#c6c6c6;">回单确认</div>
<div class="a" style="left:910.8px;top:246.89999999999998px;width:149.20000000000005px;height:26.1px;background:#fff;border-bottom:1px solid #ececec;border-right:1px solid #e6e6e6"></div>
<svg class="a" style="left:940.5px;top:257.3px" width="8" height="7" viewBox="0 0 8 7"><g transform="rotate(-40 4 3.5)"><rect x="0.3" y="1.9" width="4.4" height="3.2" rx="1.6" fill="none" stroke="#3bb0d3" stroke-width="0.95"/><rect x="3.3" y="1.9" width="4.4" height="3.2" rx="1.6" fill="none" stroke="#3bb0d3" stroke-width="0.95"/></g></svg>
<div class="t" style="left:948.6px;top:256.9px;font-size:8.2px;color:#3bb0d3;">上传</div>
<svg class="a" style="left:970px;top:257.3px" width="8" height="7" viewBox="0 0 8 7"><g transform="rotate(-40 4 3.5)"><rect x="0.3" y="1.9" width="4.4" height="3.2" rx="1.6" fill="none" stroke="#3bb0d3" stroke-width="0.95"/><rect x="3.3" y="1.9" width="4.4" height="3.2" rx="1.6" fill="none" stroke="#3bb0d3" stroke-width="0.95"/></g></svg>
<div class="t" style="left:978.6px;top:256.9px;font-size:8.2px;color:#3bb0d3;">查看</div>
<div class="t" style="left:998px;top:256.9px;font-size:8.2px;color:#3bb0d3;">回单确认</div>
<div class="a" style="left:910.8px;top:273.0px;width:149.20000000000005px;height:56.5px;background:#fafafa;border-bottom:1px solid #ececec;border-right:1px solid #e6e6e6"></div>
<div class="a" style="left:910.8px;top:329.5px;width:149.20000000000005px;height:26.1px;background:#fff;border-bottom:1px solid #ececec;border-right:1px solid #e6e6e6"></div>
<svg class="a" style="left:940.5px;top:339.9px" width="8" height="7" viewBox="0 0 8 7"><g transform="rotate(-40 4 3.5)"><rect x="0.3" y="1.9" width="4.4" height="3.2" rx="1.6" fill="none" stroke="#c6c6c6" stroke-width="0.95"/><rect x="3.3" y="1.9" width="4.4" height="3.2" rx="1.6" fill="none" stroke="#c6c6c6" stroke-width="0.95"/></g></svg>
<div class="t" style="left:948.6px;top:339.5px;font-size:8.2px;color:#c6c6c6;">上传</div>
<svg class="a" style="left:970px;top:339.9px" width="8" height="7" viewBox="0 0 8 7"><g transform="rotate(-40 4 3.5)"><rect x="0.3" y="1.9" width="4.4" height="3.2" rx="1.6" fill="none" stroke="#3bb0d3" stroke-width="0.95"/><rect x="3.3" y="1.9" width="4.4" height="3.2" rx="1.6" fill="none" stroke="#3bb0d3" stroke-width="0.95"/></g></svg>
<div class="t" style="left:978.6px;top:339.5px;font-size:8.2px;color:#3bb0d3;">查看</div>
<div class="t" style="left:998px;top:339.5px;font-size:8.2px;color:#c6c6c6;">回单确认</div>
<div class="a" style="left:910.8px;top:355.6px;width:149.20000000000005px;height:26.1px;background:#fff;border-bottom:1px solid #ececec;border-right:1px solid #e6e6e6"></div>
<svg class="a" style="left:940.5px;top:366.0px" width="8" height="7" viewBox="0 0 8 7"><g transform="rotate(-40 4 3.5)"><rect x="0.3" y="1.9" width="4.4" height="3.2" rx="1.6" fill="none" stroke="#c6c6c6" stroke-width="0.95"/><rect x="3.3" y="1.9" width="4.4" height="3.2" rx="1.6" fill="none" stroke="#c6c6c6" stroke-width="0.95"/></g></svg>
<div class="t" style="left:948.6px;top:365.6px;font-size:8.2px;color:#c6c6c6;">上传</div>
<svg class="a" style="left:970px;top:366.0px" width="8" height="7" viewBox="0 0 8 7"><g transform="rotate(-40 4 3.5)"><rect x="0.3" y="1.9" width="4.4" height="3.2" rx="1.6" fill="none" stroke="#3bb0d3" stroke-width="0.95"/><rect x="3.3" y="1.9" width="4.4" height="3.2" rx="1.6" fill="none" stroke="#3bb0d3" stroke-width="0.95"/></g></svg>
<div class="t" style="left:978.6px;top:365.6px;font-size:8.2px;color:#3bb0d3;">查看</div>
<div class="t" style="left:998px;top:365.6px;font-size:8.2px;color:#c6c6c6;">回单确认</div>
<div class="a" style="left:910.8px;top:381.70000000000005px;width:149.20000000000005px;height:26.1px;background:#fff;border-bottom:1px solid #ececec;border-right:1px solid #e6e6e6"></div>
<svg class="a" style="left:940.5px;top:392.1px" width="8" height="7" viewBox="0 0 8 7"><g transform="rotate(-40 4 3.5)"><rect x="0.3" y="1.9" width="4.4" height="3.2" rx="1.6" fill="none" stroke="#c6c6c6" stroke-width="0.95"/><rect x="3.3" y="1.9" width="4.4" height="3.2" rx="1.6" fill="none" stroke="#c6c6c6" stroke-width="0.95"/></g></svg>
<div class="t" style="left:948.6px;top:391.70000000000005px;font-size:8.2px;color:#c6c6c6;">上传</div>
<svg class="a" style="left:970px;top:392.1px" width="8" height="7" viewBox="0 0 8 7"><g transform="rotate(-40 4 3.5)"><rect x="0.3" y="1.9" width="4.4" height="3.2" rx="1.6" fill="none" stroke="#3bb0d3" stroke-width="0.95"/><rect x="3.3" y="1.9" width="4.4" height="3.2" rx="1.6" fill="none" stroke="#3bb0d3" stroke-width="0.95"/></g></svg>
<div class="t" style="left:978.6px;top:391.70000000000005px;font-size:8.2px;color:#3bb0d3;">查看</div>
<div class="t" style="left:998px;top:391.70000000000005px;font-size:8.2px;color:#c6c6c6;">回单确认</div>
<div class="a" style="left:910.8px;top:407.80000000000007px;width:149.20000000000005px;height:26.1px;background:#fff;border-bottom:1px solid #ececec;border-right:1px solid #e6e6e6"></div>
<svg class="a" style="left:940.5px;top:418.2px" width="8" height="7" viewBox="0 0 8 7"><g transform="rotate(-40 4 3.5)"><rect x="0.3" y="1.9" width="4.4" height="3.2" rx="1.6" fill="none" stroke="#c6c6c6" stroke-width="0.95"/><rect x="3.3" y="1.9" width="4.4" height="3.2" rx="1.6" fill="none" stroke="#c6c6c6" stroke-width="0.95"/></g></svg>
<div class="t" style="left:948.6px;top:417.80000000000007px;font-size:8.2px;color:#c6c6c6;">上传</div>
<svg class="a" style="left:970px;top:418.2px" width="8" height="7" viewBox="0 0 8 7"><g transform="rotate(-40 4 3.5)"><rect x="0.3" y="1.9" width="4.4" height="3.2" rx="1.6" fill="none" stroke="#3bb0d3" stroke-width="0.95"/><rect x="3.3" y="1.9" width="4.4" height="3.2" rx="1.6" fill="none" stroke="#3bb0d3" stroke-width="0.95"/></g></svg>
<div class="t" style="left:978.6px;top:417.80000000000007px;font-size:8.2px;color:#3bb0d3;">查看</div>
<div class="t" style="left:998px;top:417.80000000000007px;font-size:8.2px;color:#c6c6c6;">回单确认</div>
<div class="a" style="left:910.8px;top:433.9000000000001px;width:149.20000000000005px;height:26.1px;background:#fff;border-bottom:1px solid #ececec;border-right:1px solid #e6e6e6"></div>
<svg class="a" style="left:940.5px;top:444.3px" width="8" height="7" viewBox="0 0 8 7"><g transform="rotate(-40 4 3.5)"><rect x="0.3" y="1.9" width="4.4" height="3.2" rx="1.6" fill="none" stroke="#c6c6c6" stroke-width="0.95"/><rect x="3.3" y="1.9" width="4.4" height="3.2" rx="1.6" fill="none" stroke="#c6c6c6" stroke-width="0.95"/></g></svg>
<div class="t" style="left:948.6px;top:443.9000000000001px;font-size:8.2px;color:#c6c6c6;">上传</div>
<svg class="a" style="left:970px;top:444.3px" width="8" height="7" viewBox="0 0 8 7"><g transform="rotate(-40 4 3.5)"><rect x="0.3" y="1.9" width="4.4" height="3.2" rx="1.6" fill="none" stroke="#3bb0d3" stroke-width="0.95"/><rect x="3.3" y="1.9" width="4.4" height="3.2" rx="1.6" fill="none" stroke="#3bb0d3" stroke-width="0.95"/></g></svg>
<div class="t" style="left:978.6px;top:443.9000000000001px;font-size:8.2px;color:#3bb0d3;">查看</div>
<div class="t" style="left:998px;top:443.9000000000001px;font-size:8.2px;color:#c6c6c6;">回单确认</div>
<div class="a" style="left:910.8px;top:460.0000000000001px;width:149.20000000000005px;height:26.1px;background:#fff;border-bottom:1px solid #ececec;border-right:1px solid #e6e6e6"></div>
<svg class="a" style="left:940.5px;top:470.4px" width="8" height="7" viewBox="0 0 8 7"><g transform="rotate(-40 4 3.5)"><rect x="0.3" y="1.9" width="4.4" height="3.2" rx="1.6" fill="none" stroke="#c6c6c6" stroke-width="0.95"/><rect x="3.3" y="1.9" width="4.4" height="3.2" rx="1.6" fill="none" stroke="#c6c6c6" stroke-width="0.95"/></g></svg>
<div class="t" style="left:948.6px;top:470.0000000000001px;font-size:8.2px;color:#c6c6c6;">上传</div>
<svg class="a" style="left:970px;top:470.4px" width="8" height="7" viewBox="0 0 8 7"><g transform="rotate(-40 4 3.5)"><rect x="0.3" y="1.9" width="4.4" height="3.2" rx="1.6" fill="none" stroke="#3bb0d3" stroke-width="0.95"/><rect x="3.3" y="1.9" width="4.4" height="3.2" rx="1.6" fill="none" stroke="#3bb0d3" stroke-width="0.95"/></g></svg>
<div class="t" style="left:978.6px;top:470.0000000000001px;font-size:8.2px;color:#3bb0d3;">查看</div>
<div class="t" style="left:998px;top:470.0000000000001px;font-size:8.2px;color:#c6c6c6;">回单确认</div>
<div class="a" style="left:910.8px;top:486.10000000000014px;width:149.20000000000005px;height:26.1px;background:#fff;border-bottom:1px solid #ececec;border-right:1px solid #e6e6e6"></div>
<svg class="a" style="left:940.5px;top:496.5px" width="8" height="7" viewBox="0 0 8 7"><g transform="rotate(-40 4 3.5)"><rect x="0.3" y="1.9" width="4.4" height="3.2" rx="1.6" fill="none" stroke="#c6c6c6" stroke-width="0.95"/><rect x="3.3" y="1.9" width="4.4" height="3.2" rx="1.6" fill="none" stroke="#c6c6c6" stroke-width="0.95"/></g></svg>
<div class="t" style="left:948.6px;top:496.10000000000014px;font-size:8.2px;color:#c6c6c6;">上传</div>
<svg class="a" style="left:970px;top:496.5px" width="8" height="7" viewBox="0 0 8 7"><g transform="rotate(-40 4 3.5)"><rect x="0.3" y="1.9" width="4.4" height="3.2" rx="1.6" fill="none" stroke="#3bb0d3" stroke-width="0.95"/><rect x="3.3" y="1.9" width="4.4" height="3.2" rx="1.6" fill="none" stroke="#3bb0d3" stroke-width="0.95"/></g></svg>
<div class="t" style="left:978.6px;top:496.10000000000014px;font-size:8.2px;color:#3bb0d3;">查看</div>
<div class="t" style="left:998px;top:496.10000000000014px;font-size:8.2px;color:#c6c6c6;">回单确认</div>
<div class="a" style="left:169.4px;top:512.2000000000002px;width:890.6px;height:12.2px;background:#f1f1f1;"></div>
<div class="a" style="left:181.7px;top:514.2000000000002px;width:447.2px;height:9.7px;background:#c1c1c1;"></div>
<svg class="a" style="left:173.5px;top:515.7px" width="4" height="6"><path d="M3.5 0.3 L0.5 3 L3.5 5.7Z" fill="#a3a3a3"/></svg>
<svg class="a" style="left:1052px;top:515.7px" width="4" height="6"><path d="M0.5 0.3 L3.5 3 L0.5 5.7Z" fill="#505050"/></svg>
<div class="t" style="left:809.5px;top:538.3px;font-size:8.6px;color:#666;letter-spacing:-0.3px">每页行数:</div>
<div class="t" style="left:868.5px;top:538px;font-size:8.5px;color:#666;font-family:'Liberation Serif',serif">10</div>
<svg class="a" style="left:881px;top:540px" width="7" height="5"><path d="M0.5 0.8 L3.5 3.8 L6.5 0.8" stroke="#ccc" stroke-width="0.8" fill="none"/></svg>
<div class="t" style="left:911px;top:538px;font-size:8.7px;color:#666;font-family:'Liberation Serif',serif;word-spacing:0.9px">1 - 10 / 175</div>
<svg class="a" style="left:973.3px;top:537.5px" width="9" height="8"><path d="M0.7 0.3 V7.2 M7.5 0.3 L3.8 3.75 L7.5 7.2" stroke="#888" stroke-width="0.9" fill="none"/></svg>
<svg class="a" style="left:999.5px;top:537.5px" width="5" height="8"><path d="M4.2 0.3 L0.8 3.75 L4.2 7.2" stroke="#888" stroke-width="0.9" fill="none"/></svg>
<svg class="a" style="left:1023.8px;top:537.5px" width="5" height="8"><path d="M0.8 0.3 L4.2 3.75 L0.8 7.2" stroke="#333" stroke-width="0.9" fill="none"/></svg>
<svg class="a" style="left:1046px;top:537.5px" width="9" height="8"><path d="M0.7 0.3 L4.3 3.75 L0.7 7.2 M7.8 0.3 V7.2" stroke="#333" stroke-width="0.9" fill="none"/></svg>
<div class="a" style="left:1044.4px;top:596.4px;width:26.8px;height:16px;background:#f6f7f9;border:1px solid #e4e6ea;border-bottom:none"></div>
<div class="t" style="left:1049px;top:602.5px;font-size:9.5px;color:#c8c8c8;">捕捉</div>
<div class="a" style="left:147px;top:611px;width:933px;height:1px;background:#dcdcdc"></div>
</body></html>
